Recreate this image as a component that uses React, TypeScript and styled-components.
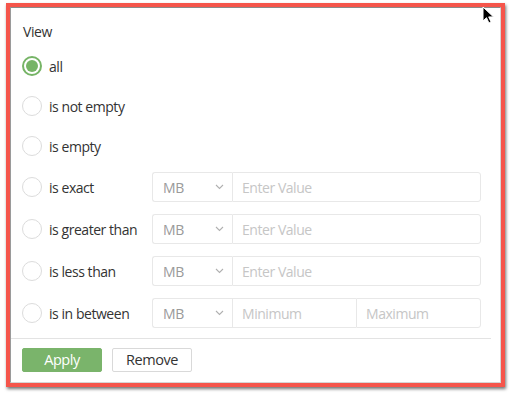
import styled, { createGlobalStyle } from "styled-components";

const FONT = `"Open Sans", "Noto Sans", sans-serif`;

const GlobalStyle = createGlobalStyle`
  html, body {
    margin: 0;
    padding: 0;
    background: #ffffff;
  }
  body {
    font-family: ${FONT};
    color: #333333;
    letter-spacing: -0.45px;
  }
`;

const Page = styled.div`
  position: relative;
  width: 510px;
  height: 396px;
  overflow: hidden;
  padding: 3px 0 0 6px;
  box-sizing: border-box;
`;

const Frame = styled.div`
  width: 499px;
  height: 384px;
  box-sizing: border-box;
  border: 4px solid #f5554b;
  box-shadow: 1px 2px 3px rgba(0, 0, 0, 0.55);
`;

const Panel = styled.div`
  height: 100%;
  box-sizing: border-box;
  background: #ffffff;
  border: 1px solid #d6d6d6;
  border-top-color: #8a8a8a;
  border-left-color: #9a9a9a;
  display: flex;
  flex-direction: column;
  padding: 13px 9px 0 12px;
`;

const Title = styled.div`
  font-size: 14px;
  line-height: 22px;
  color: #333;
`;

const List = styled.div`
  display: flex;
  flex-direction: column;
  margin-top: 3px;
`;

const Row = styled.div<{ $tall?: boolean }>`
  display: flex;
  align-items: center;
  height: ${(p) => (p.$tall ? "42px" : "40px")};
  padding-right: 10px;
`;

const Radio = styled.span<{ $checked?: boolean }>`
  width: 20px;
  height: 20px;
  box-sizing: border-box;
  border-radius: 50%;
  margin-left: -1px;
  flex-shrink: 0;
  border: ${(p) => (p.$checked ? "2px solid #76b466" : "1.5px solid #dcdcdc")};
  display: flex;
  align-items: center;
  justify-content: center;
  &::after {
    content: "";
    display: ${(p) => (p.$checked ? "block" : "none")};
    width: 12px;
    height: 12px;
    border-radius: 50%;
    background: #76b466;
  }
`;

const Label = styled.span`
  font-size: 14px;
  color: #333;
  margin-left: 7px;
  width: 103px;
  white-space: nowrap;
`;

const Select = styled.div`
  width: 80px;
  height: 30px;
  box-sizing: border-box;
  border: 1px solid #e8e8e8;
  border-right: none;
  border-radius: 3px 0 0 3px;
  display: flex;
  align-items: center;
  justify-content: space-between;
  padding: 0 8px 0 10px;
  font-size: 14px;
  color: #9a9a9a;
  flex-shrink: 0;
`;

const Field = styled.input<{ $last?: boolean }>`
  flex: 1;
  min-width: 0;
  height: 30px;
  box-sizing: border-box;
  border: 1px solid #e8e8e8;
  border-radius: ${(p) => (p.$last ? "0 3px 3px 0" : "0")};
  border-right: ${(p) => (p.$last ? "1px solid #e8e8e8" : "none")};
  padding: 0 9px;
  font-family: ${FONT};
  font-size: 14px;
  letter-spacing: -0.45px;
  color: #333;
  outline: none;
  background: #fff;
  &::placeholder {
    color: #c6c6c6;
  }
`;

const Divider = styled.div`
  height: 1px;
  background: #e3e3e3;
  margin: 4px 0 0 -12px;
`;

const Footer = styled.div`
  display: flex;
  gap: 10px;
  padding-top: 9px;
  margin-left: -1px;
`;

const Button = styled.button<{ $primary?: boolean }>`
  width: 80px;
  height: 24px;
  box-sizing: border-box;
  border-radius: 2px;
  font-family: ${FONT};
  font-size: 14.5px;
  letter-spacing: -0.45px;
  line-height: 1;
  padding: 0;
  cursor: pointer;
  border: 1px solid ${(p) => (p.$primary ? "#7ab46b" : "#d9d9d9")};
  background: ${(p) => (p.$primary ? "#7ab46b" : "#ffffff")};
  color: ${(p) => (p.$primary ? "#ffffff" : "#333333")};
`;

const Cursor = styled.svg`
  position: absolute;
  left: 482px;
  top: 6px;
`;

const Chevron = () => (
  <svg width="9" height="6" viewBox="0 0 9 6">
    <path d="M1 1l3.5 3.5L8 1" fill="none" stroke="#b0b0b0" strokeWidth="1.1" />
  </svg>
);

type Kind = "none" | "single" | "range";

const options: { label: string; kind: Kind }[] = [
  { label: "all", kind: "none" },
  { label: "is not empty", kind: "none" },
  { label: "is empty", kind: "none" },
  { label: "is exact", kind: "single" },
  { label: "is greater than", kind: "single" },
  { label: "is less than", kind: "single" },
  { label: "is in between", kind: "range" },
];

export default function App() {
  return (
    <Page>
      <GlobalStyle />
      <Frame>
        <Panel>
          <Title>View</Title>
          <List>
            {options.map((o, i) => (
              <Row key={o.label} $tall={o.kind !== "none"}>
                <Radio $checked={i === 0} />
                <Label>{o.label}</Label>
                {o.kind !== "none" && (
                  <Select>
                    MB
                    <Chevron />
                  </Select>
                )}
                {o.kind === "single" && <Field $last placeholder="Enter Value" />}
                {o.kind === "range" && (
                  <>
                    <Field placeholder="Minimum" />
                    <Field $last placeholder="Maximum" />
                  </>
                )}
              </Row>
            ))}
          </List>
          <Divider />
          <Footer>
            <Button $primary>Apply</Button>
            <Button>Remove</Button>
          </Footer>
        </Panel>
      </Frame>
      <Cursor width="13" height="18" viewBox="0 0 13 18">
        <path d="M1 1v14l3.5-3.3 2.4 5.3 2.2-1-2.4-5.1H11.5z" fill="#000" stroke="#fff" strokeWidth="1" />
      </Cursor>
    </Page>
  );
}
